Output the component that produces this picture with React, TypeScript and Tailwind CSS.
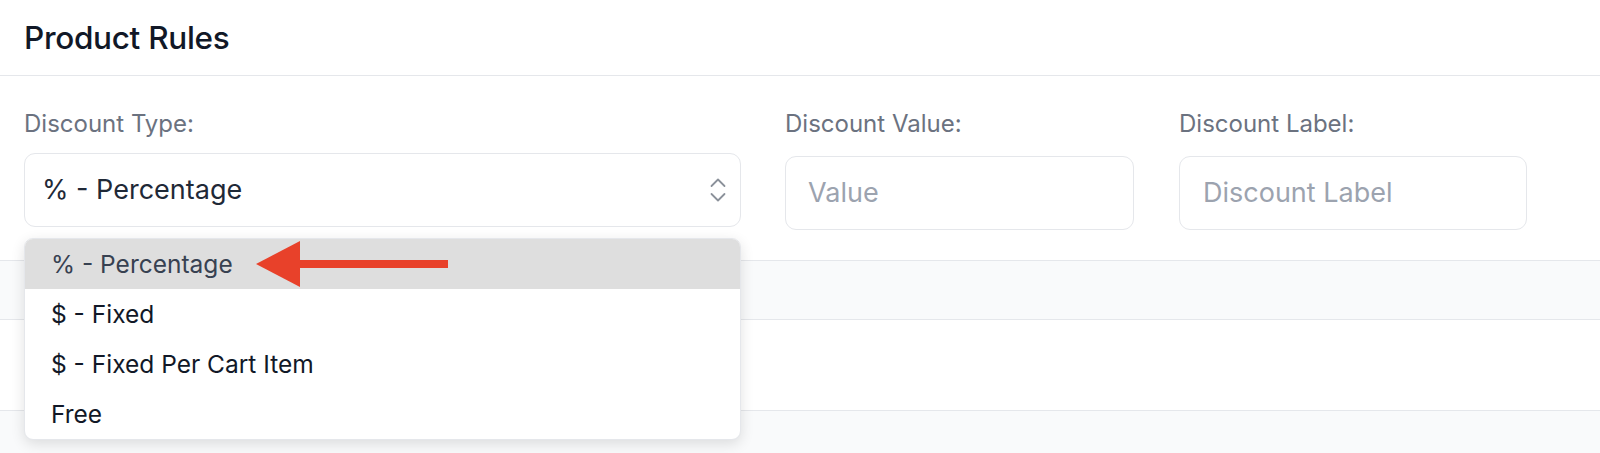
const options = ['% - Percentage', '$ - Fixed', '$ - Fixed Per Cart Item', 'Free'];

function RedArrow() {
  return (
    <svg width="196" height="50" viewBox="0 0 196 50" className="absolute left-[229px] top-0">
      <rect x="42" y="21" width="152" height="8" fill="#e8412a" />
      <polygon points="2,25 46,2 46,48" fill="#e8412a" />
    </svg>
  );
}

function UpDownIcon() {
  return (
    <svg width="16" height="24" viewBox="0 0 16 24" fill="none" stroke="#8b919a" strokeWidth="1.8" strokeLinecap="round" strokeLinejoin="round">
      <path d="M1.5 8L8 1.5L14.5 8" />
      <path d="M1.5 16L8 22.5L14.5 16" />
    </svg>
  );
}

export default function App() {
  return (
    <div className="w-[1600px] h-[453px] bg-white overflow-hidden font-['Inter',sans-serif]">
      <div className="h-[76px] px-[24px] flex items-center border-b border-[#e5e7eb]">
        <h2 className="text-[31.5px] font-medium text-[#111827] tracking-[-0.3px]">Product Rules</h2>
      </div>

      <div className="relative flex items-start px-[24px] pt-[32px] pb-[30px]">
        <div className="w-[717px] flex flex-col relative">
          <label className="text-[24px] text-[#6b7280] leading-[32px]">Discount Type:</label>
          <div className="mt-[13px] h-[74px] border border-[#e5e7eb] rounded-[11px] flex items-center justify-between pl-[17px] pr-[14px]">
            <span className="text-[27px] text-[#1f2937]">% - Percentage</span>
            <UpDownIcon />
          </div>

          <div className="absolute left-0 top-[130px] w-[717px] bg-white rounded-[9px] border border-[#e5e7eb] shadow-[0_4px_14px_rgba(0,0,0,0.12)] z-10 overflow-hidden">
            {options.map((opt, i) => (
              <div
                key={opt}
                className={
                  i === 0
                    ? 'relative h-[50px] flex items-center pl-[26px] bg-[#dedede] text-[#374151] text-[24.5px]'
                    : 'h-[50px] flex items-center pl-[26px] text-[#111827] text-[24.5px]'
                }
              >
                {opt}
                {i === 0 && <RedArrow />}
              </div>
            ))}
          </div>
        </div>

        <div className="w-[349px] ml-[44px] flex flex-col">
          <label className="text-[24px] text-[#6b7280] leading-[32px]">Discount Value:</label>
          <div className="mt-[16px] h-[74px] border border-[#e5e7eb] rounded-[11px] flex items-center pl-[22px]">
            <span className="text-[27px] text-[#9ca3af]">Value</span>
          </div>
        </div>

        <div className="w-[348px] ml-[45px] flex flex-col">
          <label className="text-[24px] text-[#6b7280] leading-[32px]">Discount Label:</label>
          <div className="mt-[16px] h-[74px] border border-[#e5e7eb] rounded-[11px] flex items-center pl-[23px]">
            <span className="text-[27px] text-[#9ca3af]">Discount Label</span>
          </div>
        </div>
      </div>

      <div className="h-[59px] bg-[#f9fafb] border-t border-[#e5e7eb]" />
      <div className="h-[91px] bg-white border-t border-[#e5e7eb]" />
      <div className="h-[60px] bg-[#f9fafb] border-t border-[#e5e7eb]" />
    </div>
  );
}
